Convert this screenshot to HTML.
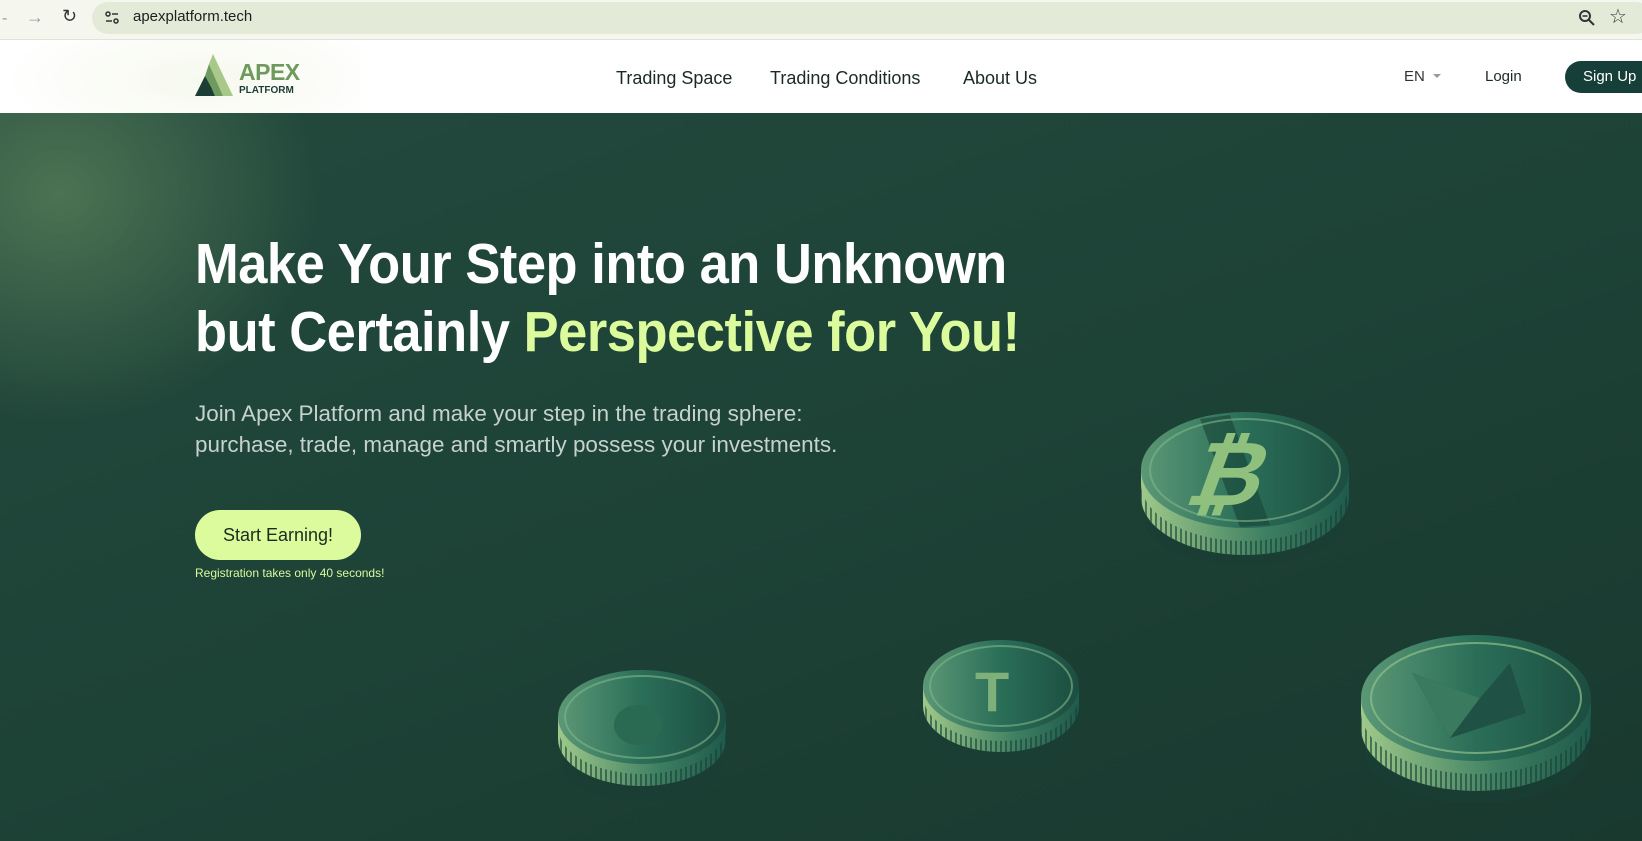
<!DOCTYPE html>
<html><head><meta charset="utf-8"><style>
*{margin:0;padding:0;box-sizing:border-box}
body{width:1642px;height:841px;overflow:hidden;font-family:"Liberation Sans",sans-serif;background:#1d4438;position:relative}
.bar{position:absolute;left:0;top:0;width:1642px;height:40px;background:#f5f7ef;border-bottom:1px solid #dfe3d8}
.pill{position:absolute;left:92px;top:2px;width:1560px;height:32px;border-radius:16px;background:#e3ebd8}
.url{position:absolute;left:133px;top:8px;font-size:15px;color:#1f1f1f}
.hdr{position:absolute;left:0;top:40px;width:1642px;height:73px;background:#fff}
.nav{position:absolute;top:28px;font-size:18px;color:#1b2a26}
.hero{position:absolute;left:0;top:113px;width:1642px;height:728px;overflow:hidden;
background:radial-gradient(ellipse 260px 230px at 60px 80px,rgba(110,150,100,.55),rgba(60,100,75,0) 100%),linear-gradient(160deg,#23493e 0%,#1d4236 50%,#19392f 100%)}
h1{position:absolute;left:195px;top:230px;font-size:57px;line-height:68px;color:#fff;font-weight:bold;white-space:nowrap;transform:scaleX(0.92);transform-origin:0 0;letter-spacing:-0.5px}
h1 span{color:#dcfb9c}
.p{position:absolute;left:195px;top:398px;font-size:22px;line-height:31px;color:#c6d2cc;white-space:nowrap;transform:scaleX(1.02);transform-origin:0 0}
.btn{position:absolute;left:195px;top:510px;width:166px;height:50px;border-radius:25px;background:#dcfb9c;color:#1a2b22;font-size:18px;text-align:center;line-height:50px}
.small{position:absolute;left:195px;top:566px;font-size:12px;color:#d9f99d}
</style></head><body>
<div class="bar">
<div style="position:absolute;left:2px;top:10px;color:#999;font-size:16px">-</div>
<div style="position:absolute;left:26px;top:7px;color:#999;font-size:18px">→</div>
<div style="position:absolute;left:62px;top:6px;color:#333;font-size:18px">↻</div>
<div class="pill"></div>
<svg style="position:absolute;left:104px;top:10px" width="16" height="16"><circle cx="4" cy="4" r="2" fill="none" stroke="#333" stroke-width="1.5"/><line x1="8" y1="4" x2="14" y2="4" stroke="#333" stroke-width="1.5"/><line x1="2" y1="11" x2="8" y2="11" stroke="#333" stroke-width="1.5"/><circle cx="12" cy="11" r="2" fill="none" stroke="#333" stroke-width="1.5"/></svg>
<div class="url">apexplatform.tech</div>
<svg style="position:absolute;left:1578px;top:9px" width="18" height="18"><circle cx="7" cy="7" r="5" fill="none" stroke="#333" stroke-width="2"/><line x1="4.5" y1="7" x2="9.5" y2="7" stroke="#333" stroke-width="1.6"/><line x1="11" y1="11" x2="16" y2="16" stroke="#333" stroke-width="2"/></svg>
<div style="position:absolute;left:1609px;top:4px;font-size:20px;color:#333">☆</div>
</div>
<div class="hdr">
<div style="position:absolute;left:0;top:0;width:360px;height:73px;background:radial-gradient(ellipse 200px 70px at 200px 40px,#f6f9ee,#fff)"></div>
<svg style="position:absolute;left:195px;top:14px" width="40" height="44" viewBox="0 0 40 44"><polygon points="18,0 38,42 28,42 14,10" fill="#a9c98a"/><polygon points="14,10 28,42 20,42 10,22" fill="#6e9a5e"/><polygon points="10,22 0,42 20,42 16,33" fill="#1b3d35"/></svg>
<div style="position:absolute;left:239px;top:19px;font-size:23px;font-weight:bold;color:#6e9a5e;letter-spacing:-0.5px">APEX</div>
<div style="position:absolute;left:239px;top:45px;font-size:10px;font-weight:bold;color:#1b3d35">PLATFORM</div>
<div class="nav" style="left:616px">Trading Space</div>
<div class="nav" style="left:770px">Trading Conditions</div>
<div class="nav" style="left:963px">About Us</div>
<div style="position:absolute;left:1404px;top:28px;font-size:15px;color:#333">EN</div>
<div style="position:absolute;left:1433px;top:34px;width:0;height:0;border-left:4px solid transparent;border-right:4px solid transparent;border-top:4px solid #999"></div>
<div style="position:absolute;left:1485px;top:28px;font-size:15px;color:#1b2a26">Login</div>
<div style="position:absolute;left:1565px;top:21px;width:100px;height:32px;border-radius:16px;background:#173f39;color:#fff;font-size:15px;line-height:32px;padding-left:18px">Sign Up</div>
</div>
<div class="hero">
<svg width="1642" height="728" style="position:absolute;left:0;top:0">
<defs>
<linearGradient id="face" x1="0" y1="0" x2="1" y2="0"><stop offset="0" stop-color="#5c9876"/><stop offset=".5" stop-color="#2a6e58"/><stop offset="1" stop-color="#1c4d40"/></linearGradient>
<linearGradient id="edge" x1="0" y1="0" x2="1" y2="0"><stop offset="0" stop-color="#9fc98a"/><stop offset=".6" stop-color="#3e7f62"/><stop offset="1" stop-color="#1f5a4a"/></linearGradient>
<pattern id="rid" width="5" height="10" patternUnits="userSpaceOnUse"><rect width="2" height="10" fill="#173f35"/></pattern>
</defs>
<g>
<ellipse cx="1245" cy="407" rx="100" ry="45" fill="#1a3f34" opacity=".7"/>
<path d="M1141 357 v27 a104 58 0 0 0 208 0 v-27z" fill="url(#edge)"/>
<path d="M1141 370 v14 a104 58 0 0 0 208 0 v-14 a104 58 0 0 1 -208 0z" fill="url(#rid)" opacity=".6"/>
<ellipse cx="1245" cy="357" rx="104" ry="58" fill="url(#face)"/>
<polygon points="1200,306 1230,302 1270,412 1240,414" fill="#184237" opacity=".6"/>
<ellipse cx="1245" cy="357" rx="95" ry="51" fill="none" stroke="#7fb58a" stroke-width="2" opacity=".6"/>
<text x="1185" y="392" font-size="90" font-weight="bold" fill="#8fc07e" transform="skewX(-20) translate(140 0)" font-family="Liberation Sans">₿</text>
</g>
<g>
<ellipse cx="1001" cy="620" rx="74" ry="36" fill="#1a3f34" opacity=".7"/>
<path d="M923 573 v20 a78 46 0 0 0 156 0 v-20z" fill="url(#edge)"/>
<path d="M923 582 v11 a78 46 0 0 0 156 0 v-11 a78 46 0 0 1 -156 0z" fill="url(#rid)" opacity=".6"/>
<ellipse cx="1001" cy="573" rx="78" ry="46" fill="url(#face)"/>
<ellipse cx="1001" cy="573" rx="71" ry="40" fill="none" stroke="#7fb58a" stroke-width="2" opacity=".6"/>
<text x="975" y="598" font-size="56" font-weight="bold" fill="#7fb07a" font-family="Liberation Sans">T</text>
</g>
<g>
<ellipse cx="642" cy="650" rx="80" ry="38" fill="#1a3f34" opacity=".7"/>
<path d="M558 604 v22 a84 47 0 0 0 168 0 v-22z" fill="url(#edge)"/>
<path d="M558 614 v12 a84 47 0 0 0 168 0 v-12 a84 47 0 0 1 -168 0z" fill="url(#rid)" opacity=".6"/>
<ellipse cx="642" cy="604" rx="84" ry="47" fill="url(#face)"/>
<ellipse cx="642" cy="604" rx="77" ry="41" fill="none" stroke="#7fb58a" stroke-width="2" opacity=".6"/>
<ellipse cx="638" cy="612" rx="24" ry="20" fill="#2b6a52"/>
</g>
<g>
<ellipse cx="1476" cy="640" rx="112" ry="50" fill="#1a3f34" opacity=".7"/>
<path d="M1361 585 v30 a115 63 0 0 0 230 0 v-30z" fill="url(#edge)"/>
<path d="M1361 598 v17 a115 63 0 0 0 230 0 v-17 a115 63 0 0 1 -230 0z" fill="url(#rid)" opacity=".6"/>
<ellipse cx="1476" cy="585" rx="115" ry="63" fill="url(#face)"/>
<ellipse cx="1476" cy="585" rx="105" ry="55" fill="none" stroke="#8fc08a" stroke-width="2" opacity=".7"/>
<polygon points="1412,560 1480,585 1510,550 1526,600 1450,625" fill="#1f5244"/>
<polygon points="1412,560 1480,585 1450,625" fill="#3a7a5e"/>
</g>
</svg>
</div>
<h1>Make Your Step into an Unknown<br>but Certainly <span>Perspective for You!</span></h1>
<div class="p">Join Apex Platform and make your step in the trading sphere:<br>purchase, trade, manage and smartly possess your investments.</div>
<div class="btn">Start Earning!</div>
<div class="small">Registration takes only 40 seconds!</div>
</body></html>
